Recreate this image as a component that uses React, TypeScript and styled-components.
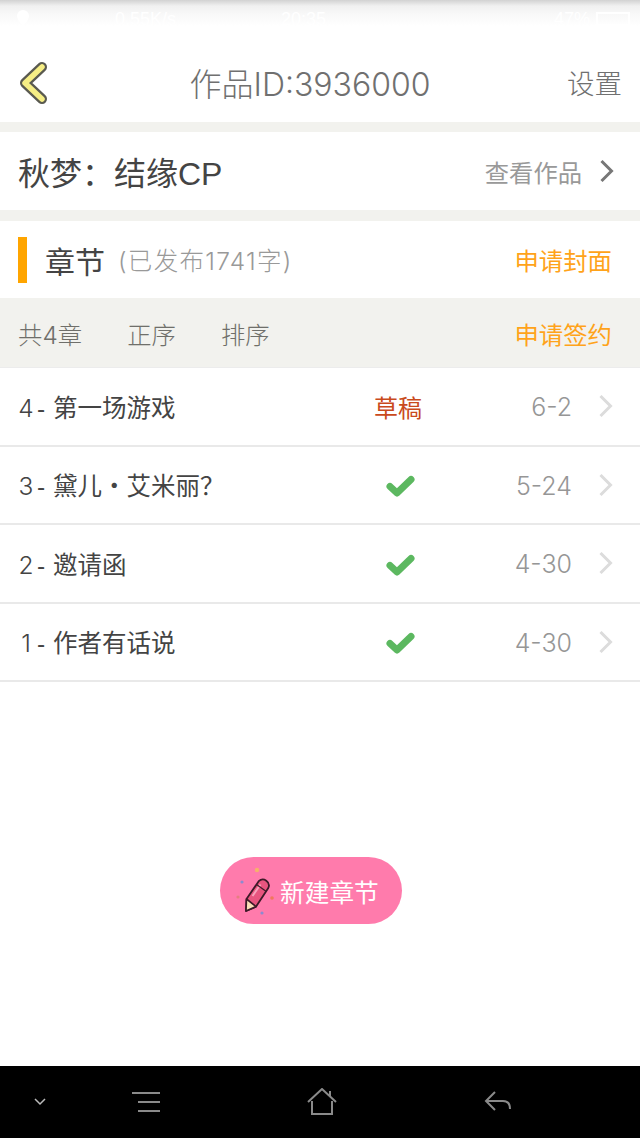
import React from "react";
import styled, { createGlobalStyle } from "styled-components";

const FONT = `"Liberation Sans", "Noto Sans CJK SC", sans-serif`;
const NUM_FONT = `Inter, "Noto Sans CJK SC", sans-serif`;

const GlobalStyle = createGlobalStyle`
  html, body {
    margin: 0;
    padding: 0;
    background: #fff;
    font-family: ${FONT};
  }
  * {
    box-sizing: border-box;
  }
`;

type Chapter = {
  id: string;
  title: string;
  draft?: boolean;
  date: string;
};

const chapters: Chapter[] = [
  { id: "4", title: "第一场游戏", draft: true, date: "6-2" },
  { id: "3", title: "黛儿・艾米丽？", date: "5-24" },
  { id: "2", title: "邀请函", date: "4-30" },
  { id: "1", title: "作者有话说", date: "4-30" },
];

const Chevron = () => (
  <ChevronIcon width="16" height="24" viewBox="0 0 16 24">
    <path d="M2.500 2l10 10-10 10" fill="none" stroke="currentColor" strokeWidth="3" />
  </ChevronIcon>
);

const Check = () => (
  <CheckIcon width="30" height="24" viewBox="0 0 30 24">
    <path d="M5 12.500l7 6.500L26 5.500" fill="none" stroke="#5cb860" strokeWidth="7" strokeLinejoin="round" strokeLinecap="round" />
  </CheckIcon>
);

const App: React.FC = () => {
  return (
    <Page>
      <GlobalStyle />
      <StatusBar>
        <svg width="14" height="18" viewBox="0 0 14 18">
          <path d="M7 1a6 6 0 0 1 6 6c0 4-6 10-6 10S1 11 1 7a6 6 0 0 1 6-6z" fill="#fff" />
        </svg>
        <StatusSpeed>0.55K/s</StatusSpeed>
        <StatusText>20:35</StatusText>
        <StatusBattery>47%</StatusBattery>
        <BatteryBox />
      </StatusBar>
      <NavBar>
        <svg width="30" height="44" viewBox="0 0 30 44">
          <path d="M24 7L7 23l17 16" fill="none" stroke="#5a5a50" strokeWidth="10" strokeLinecap="round" strokeLinejoin="round" />
          <path d="M24 7L7 23l17 16" fill="none" stroke="#f6ee85" strokeWidth="5.500" strokeLinecap="round" strokeLinejoin="round" />
        </svg>
        <NavTitle>作品ID:3936000</NavTitle>
        <NavAction>设置</NavAction>
      </NavBar>
      <WorkRow>
        <WorkTitle>秋梦：结缘CP</WorkTitle>
        <WorkLink>
          查看作品
          <WorkChevron>
            <Chevron />
          </WorkChevron>
        </WorkLink>
      </WorkRow>
      <SectionHeader>
        <SectionMark />
        <SectionTitle>章节</SectionTitle>
        <SectionNote>(已发布1741字)</SectionNote>
        <OrangeLink>申请封面</OrangeLink>
      </SectionHeader>
      <Toolbar>
        <ToolItem>共4章</ToolItem>
        <ToolItem>正序</ToolItem>
        <ToolItem>排序</ToolItem>
        <OrangeLink>申请签约</OrangeLink>
      </Toolbar>
      <div>
        {chapters.map((c) => (
          <ChapterRow key={c.id}>
            <ChapterName>
              <ChapterNo>{c.id}</ChapterNo>
              <ChapterDash>-</ChapterDash>
              <span>{c.title}</span>
            </ChapterName>
            <ChapterState>{c.draft ? <DraftLabel>草稿</DraftLabel> : <Check />}</ChapterState>
            <ChapterDate>{c.date}</ChapterDate>
            <RowChevron>
              <Chevron />
            </RowChevron>
          </ChapterRow>
        ))}
      </div>
      <Body>
        <NewButton>
          <svg width="40" height="56" viewBox="0 0 40 56">
            <circle cx="21" cy="7" r="2.200" fill="#f5b26b" />
            <circle cx="6" cy="19" r="1.600" fill="#8c8ad0" />
            <circle cx="2" cy="34" r="1.600" fill="#e57f7f" />
            <circle cx="36" cy="35" r="1.800" fill="#f0785a" />
            <circle cx="26" cy="50" r="1.600" fill="#8c8ad0" />
            <path d="M10.500 36L22.700 18.200A6 6 0 0 1 32.300 25L20.100 43.600 10 48z" fill="#e8557f" stroke="#3d1a28" strokeWidth="1.800" strokeLinejoin="round" />
            <path d="M10.500 36l9.600 7.600L10 48z" fill="#fbe0b8" stroke="#3d1a28" strokeWidth="1.600" strokeLinejoin="round" />
            <path d="M16.500 33l8-11.500" stroke="#f7a3bb" strokeWidth="2" fill="none" />
            <path d="M20.500 21.500l9.800 7" stroke="#3d1a28" strokeWidth="1.200" fill="none" />
          </svg>
          <NewLabel>新建章节</NewLabel>
        </NewButton>
      </Body>
      <SystemBar>
        <svg width="16" height="10" viewBox="0 0 16 10">
          <path d="M3 2l5 5 5-5" fill="none" stroke="#bbb" strokeWidth="1.500" />
        </svg>
        <svg width="30" height="22" viewBox="0 0 30 22">
          <path d="M1 2h28M7 11h22M7 20h22" fill="none" stroke="#8a8a8a" strokeWidth="2" />
        </svg>
        <svg width="30" height="28" viewBox="0 0 30 28">
          <path d="M1 14L15 1l14 13M5 13v13h20V13M23 8V3" fill="none" stroke="#8a8a8a" strokeWidth="2" />
        </svg>
        <svg width="30" height="24" viewBox="0 0 30 24">
          <path d="M12 2L3 11l9 9M3 11h17c5 0 7 3 7 8" fill="none" stroke="#8a8a8a" strokeWidth="2" />
        </svg>
      </SystemBar>
    </Page>
  );
};

const Page = styled.div`
  width: 640px;
  height: 1138px;
  display: flex;
  flex-direction: column;
  background: #fff;
  overflow: hidden;
`;

const StatusBar = styled.div`
  height: 40px;
  padding: 9px 10px 0 16px;
  display: flex;
  align-items: flex-start;
  background: linear-gradient(#d2d2d2 0, #f1f1f1 6px, #f8f8f8 14px, #ffffff 26px);
`;

const StatusText = styled.span`
  font-size: 18px;
  color: #fff;
`;

const StatusSpeed = styled(StatusText)`
  margin-left: 85px;
  width: 166px;
`;

const StatusBattery = styled(StatusText)`
  margin-left: auto;
  margin-right: 6px;
`;

const BatteryBox = styled.div`
  width: 34px;
  height: 14px;
  margin-top: 3px;
  border: 2px solid #fff;
`;

const NavBar = styled.div`
  height: 92px;
  padding: 1px 18px 0 18px;
  display: flex;
  align-items: center;
  justify-content: space-between;
  border-bottom: 10px solid #f2f2ee;
`;

const NavTitle = styled.div`
  font-family: ${NUM_FONT};
  font-size: 32px;
  font-weight: 300;
  color: #707070;
  margin-left: 5px;
`;

const NavAction = styled.div`
  font-size: 27.500px;
  font-weight: 300;
  color: #707070;
`;

const ChevronIcon = styled.svg`
  display: block;
`;

const CheckIcon = styled.svg`
  display: block;
  margin-left: 4px;
  margin-top: 3px;
`;

const WorkRow = styled.div`
  height: 89px;
  padding: 0 25px 0 18px;
  display: flex;
  align-items: center;
  justify-content: space-between;
  border-bottom: 11px solid #f2f2ee;
`;

const WorkTitle = styled.div`
  font-size: 32px;
  color: #444;
`;

const WorkLink = styled.div`
  display: flex;
  align-items: center;
  font-size: 24.300px;
  color: #999;
`;

const WorkChevron = styled.span`
  margin-left: 17px;
  color: #777;
`;

const SectionHeader = styled.div`
  height: 77px;
  padding: 0 28px 0 18px;
  display: flex;
  align-items: center;
`;

const SectionMark = styled.div`
  width: 9px;
  height: 46px;
  background: #ffa500;
`;

const SectionTitle = styled.div`
  margin-left: 18px;
  font-size: 30px;
  color: #444;
`;

const SectionNote = styled.div`
  margin-left: 13px;
  font-family: ${NUM_FONT};
  font-size: 24.500px;
  font-weight: 300;
  letter-spacing: 1.300px;
  color: #999;
`;

const OrangeLink = styled.div`
  margin-left: auto;
  font-size: 24.400px;
  color: #ffa31a;
`;

const Toolbar = styled.div`
  height: 70px;
  padding: 2px 28px 0 18px;
  display: flex;
  align-items: center;
  gap: 45px;
  background: #f2f2ee;
  border-bottom: 1px solid #ececec;
`;

const ToolItem = styled.div`
  font-family: ${NUM_FONT};
  font-size: 24.400px;
  font-weight: 300;
  color: #6f6f6a;
`;

const ChapterRow = styled.div`
  height: 78.500px;
  padding: 0 26px 0 18px;
  display: flex;
  align-items: center;
  border-bottom: 2px solid #e9e9e9;
`;

const ChapterName = styled.div`
  width: 340px;
  display: flex;
  align-items: baseline;
  font-size: 24.500px;
  color: #444;
`;

const ChapterNo = styled.span`
  width: 16px;
  font-family: ${NUM_FONT};
  font-weight: 300;
  text-align: center;
`;

const ChapterDash = styled.span`
  width: 19px;
  padding-left: 3px;
`;

const ChapterState = styled.div`
  width: 80px;
  display: flex;
  justify-content: center;
`;

const DraftLabel = styled.span`
  font-size: 24px;
  color: #c94a1c;
`;

const ChapterDate = styled.div`
  margin-left: auto;
  padding-top: 2px;
  font-family: ${NUM_FONT};
  font-size: 25px;
  font-weight: 300;
  color: #969696;
`;

const RowChevron = styled.span`
  margin-left: 26px;
  color: #dcdcdc;
`;

const Body = styled.div`
  flex: 1;
  padding: 175px 0 0 220px;
`;

const NewButton = styled.div`
  width: 182px;
  height: 67px;
  padding-left: 16px;
  display: flex;
  align-items: center;
  gap: 4px;
  border-radius: 34px;
  background: #ff7bac;
`;

const NewLabel = styled.span`
  font-size: 24.700px;
  color: #fff;
`;

const SystemBar = styled.div`
  height: 72px;
  display: grid;
  grid-template-columns: 80px 132px 220px 132px;
  justify-items: center;
  align-items: center;
  background: #000;
`;

export default App;
